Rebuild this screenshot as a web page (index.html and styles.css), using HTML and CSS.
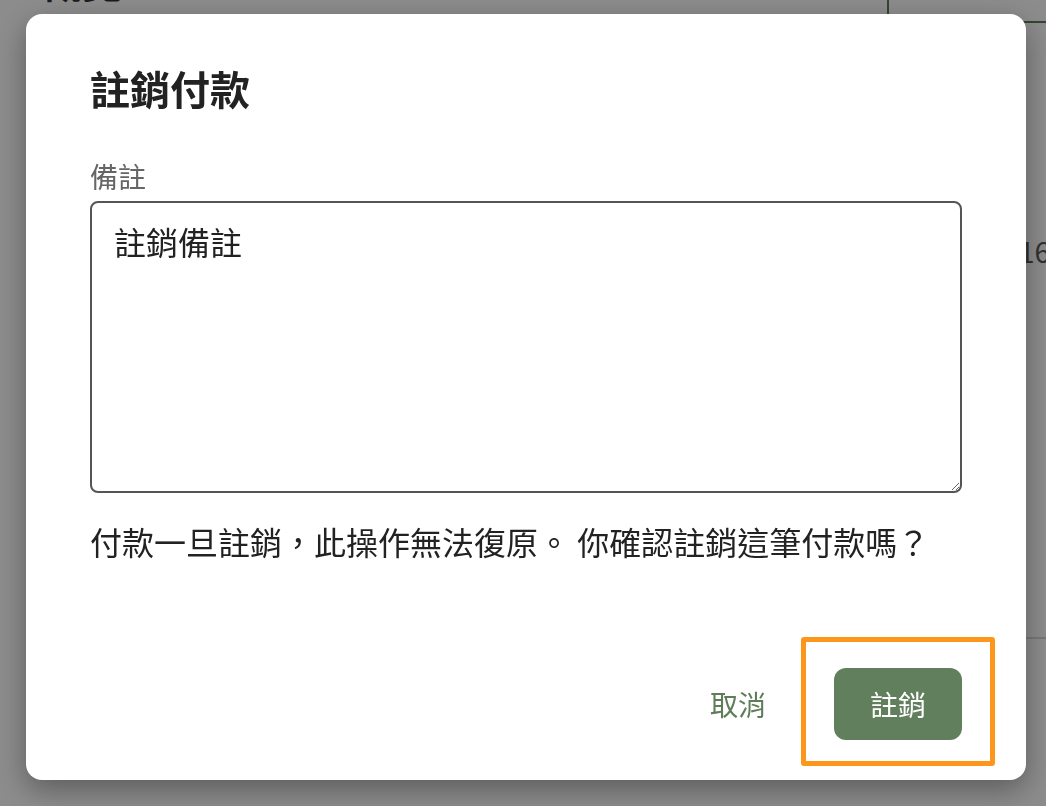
FILE: index.html
```html
<!DOCTYPE html>
<html lang="zh-Hant">
<head>
<meta charset="UTF-8">
<meta name="viewport" content="width=device-width, initial-scale=1.0">
<title>註銷付款</title>
<link rel="stylesheet" href="styles.css">
</head>
<body>
    <div class="page">
        <div class="page-header">
            <h1 class="page-title">概覽</h1>
            <div class="filter-box"></div>
        </div>
        <div class="summary-row">
            <div class="summary-value">16</div>
        </div>
        <div class="divider"></div>
    </div>

    <div class="overlay">
        <div class="modal">
            <h2 class="modal-title">註銷付款</h2>
            <label class="field-label" for="void-note">備註</label>
            <textarea class="note-input" id="void-note" name="void-note">註銷備註</textarea>
            <p class="warning-text">付款一旦註銷，此操作無法復原。 你確認註銷這筆付款嗎？</p>
            <div class="modal-actions">
                <button class="btn-text">取消</button>
                <button class="btn-primary">註銷</button>
            </div>
        </div>
    </div>
</body>
</html>
```

FILE: styles.css
```css
body {
    margin: 0;
    background-color: #ffffff;
    color: #222222;
    font-family: "Noto Sans CJK TC", "Noto Sans", sans-serif;
    height: 100vh;
    overflow: hidden;
}
.page {
    padding: 0 0 0 42px;
}
.page-header {
    display: flex;
    justify-content: space-between;
    align-items: flex-start;
    margin-top: -43px;
}
.page-title {
    font-size: 40px;
    font-weight: bold;
    line-height: 48px;
    margin: 0;
    color: #333333;
}
.filter-box {
    width: 200px;
    height: 62px;
    border: 2px solid #5f7f5c;
    border-radius: 8px;
    margin-right: -45px;
}
.summary-row {
    display: flex;
    justify-content: flex-end;
    margin-top: 208px;
}
.summary-value {
    font-size: 28px;
    line-height: 40px;
    color: #5a5a5a;
    margin-right: -4px;
}
.divider {
    height: 2px;
    background-color: #dcdcdc;
    margin-top: 366px;
}

.overlay {
    position: fixed;
    top: 0;
    left: 0;
    right: 0;
    bottom: 0;
    background-color: rgba(0, 0, 0, .45);
    display: flex;
    align-items: flex-start;
}
.modal {
    box-sizing: border-box;
    width: 1000px;
    height: 766px;
    margin: 14px 0 0 26px;
    padding: 50px 64px 40px 64px;
    background-color: #ffffff;
    border-radius: 16px;
    box-shadow: 0 10px 30px rgba(0, 0, 0, .35);
    display: flex;
    flex-direction: column;
}
.modal-title {
    font-size: 40px;
    font-weight: bold;
    line-height: 48px;
    margin: 0;
    color: #222222;
}
.field-label {
    font-size: 28px;
    line-height: 34px;
    color: #666666;
    margin-top: 47px;
}
.note-input {
    box-sizing: border-box;
    margin-top: 8px;
    height: 292px;
    width: 100%;
    padding: 14px 22px;
    border: 2px solid #555555;
    border-radius: 8px;
    font-family: "Noto Sans CJK TC", "Noto Sans", sans-serif;
    font-size: 32px;
    line-height: 48px;
    color: #222222;
    outline: none;
}
.warning-text {
    font-size: 32px;
    line-height: 48px;
    margin: 24px 0 0 0;
    color: #222222;
}
.modal-actions {
    margin-top: auto;
    display: flex;
    justify-content: flex-end;
    align-items: center;
    gap: 48px;
}
.btn-text {
    border: none;
    background: none;
    padding: 0 20px;
    font-family: "Noto Sans CJK TC", "Noto Sans", sans-serif;
    font-size: 28px;
    color: #5e7e5a;
    cursor: pointer;
}
.btn-primary {
    position: relative;
    width: 128px;
    height: 72px;
    border: none;
    border-radius: 12px;
    background-color: #627f5d;
    color: #ffffff;
    font-family: "Noto Sans CJK TC", "Noto Sans", sans-serif;
    font-size: 28px;
    cursor: pointer;
}
/* highlight frame round the confirm button */
.btn-primary:after {
    content: "";
    position: absolute;
    top: -31px;
    left: -33px;
    right: -33px;
    bottom: -26px;
    border: 5px solid #ff961c;
    border-radius: 3px;
}
```
